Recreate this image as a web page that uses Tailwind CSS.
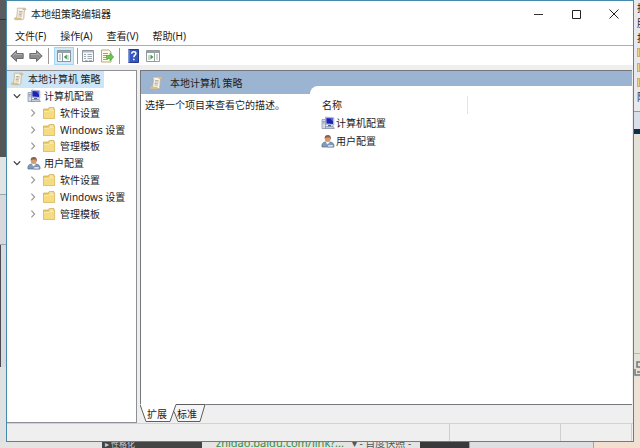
<!DOCTYPE html>
<html lang="zh-CN">
<head>
<meta charset="utf-8">
<title>本地组策略编辑器</title>
<script src="https://cdn.jsdelivr.net/npm/@tailwindcss/browser@4"></script>
</head>
<body class="h-screen overflow-hidden bg-[#e6e4e2] font-['Noto_Sans','Noto_Sans_CJK_SC',sans-serif] text-[10px] leading-4 text-[#1c1c1c]">
<svg class="hidden" aria-hidden="true">
  <symbol id="scroll" viewBox="0 0 14 14">
    <path d="M4.500 1.200h7.500c1 0 1.300 1.800 0 1.900l-.6 0-.6 7.900c0 1.200-.7 1.700-1.600 1.700H2.500c-1.400 0-1.500-2 0-2h1.100L4.600 3C3.900 2.500 3.800 1.500 4.500 1.200z" fill="#f8f3e6" stroke="#b8ae98" stroke-width=".8"/>
    <path d="M11.400 3.100H10c-.7-.3-.7-1.500.2-1.800H12c1 .2 1 1.700-.6 1.800zM1.500 11.600c0 .8.500 1.200 1 1.200h6.800c-.8-.3-1-1.300-.8-2.100H2.300c-.5 0-.8.400-.8.900z" fill="#d9bd83"/>
    <path d="M6 4.500h3.500M5.800 6h3.800M5.700 7.500h3M5.500 9h3.500" stroke="#aaa594" stroke-width=".8"/>
  </symbol>
  <symbol id="computer" viewBox="0 0 14 14">
    <path d="M1 3.500h3.500v9H1z" fill="#d4dbe6" stroke="#7f8ba3" stroke-width=".7"/>
    <path d="M1.700 5.500h2M1.700 7h2" stroke="#6d7892" stroke-width=".7"/>
    <path d="M4.500 1l8.300.8v7.400l-8.300-.7z" fill="#c9d3ec" stroke="#8490b5" stroke-width=".6"/>
    <path d="M5.400 1.900l6.600.6v5.600l-6.600-.6z" fill="#1d22b4"/>
    <path d="M9 2.300l3 .2v3.300z" fill="#5369dd"/>
    <path d="M7 9h3v1.500h-3z" fill="#5d687e"/>
    <path d="M4.800 10.500h7.400l1.200 2H4z" fill="#c7cdd8" stroke="#7b86a0" stroke-width=".7"/>
  </symbol>
  <symbol id="user" viewBox="0 0 14 14">
    <path d="M1 13c-.5-2.500.5-4.500 3-5h5c3 .3 4.300 2.200 4 5z" fill="#7f9cbf" stroke="#50698c" stroke-width=".7"/>
    <path d="M4.500 8l2 2.500L9 8z" fill="#f3f5f8"/>
    <circle cx="6.700" cy="4.700" r="3" fill="#d49a72"/>
    <path d="M3.700 4.300C3.400 2 5 .8 7 .9c2.200.1 3.300 1.700 2.800 4.100-.8-.3-.9-1.300-1.200-1.800-1.500.4-3.500-.2-4.900 1.100z" fill="#8a6048"/>
    <path d="M7 10.500h5.300v2.500H6.500z" fill="#d6dfeb" stroke="#65809f" stroke-width=".6"/>
  </symbol>
  <symbol id="folder" viewBox="0 0 14 14">
    <path d="M1.500 12.500V3h4.700l1-1.400h4.800v1.600h.6v9.300z" fill="#ebcb69" stroke="#cda748" stroke-width=".7"/>
    <path d="M7.400 2.500h4v1h-4z" fill="#fff8dd"/>
    <path d="M1.800 5h4.700l1-1h4.800v8.200H1.800z" fill="#f5dc83"/>
    <path d="M2 5.400h4.800l1-1H12" fill="none" stroke="#fff1b8" stroke-width=".7"/>
  </symbol>
  <symbol id="open" viewBox="0 0 8 8"><path d="M.8 2.400L4 5.600l3.200-3.200" fill="none" stroke="#3b3b3b" stroke-width="1.300"/></symbol>
  <symbol id="closed" viewBox="0 0 8 8"><path d="M2.400.6L5.600 4 2.400 7.400" fill="none" stroke="#9a9a9a" stroke-width="1.200"/></symbol>
  <symbol id="arrow" viewBox="0 0 14 14"><path d="M.8 7L6.500 1.500v3h6.700v5H6.500v3z" fill="#8d8d8d" stroke="#646464" stroke-width=".9"/><path d="M3 6.500l2.700-2.400v1.400h6.500" fill="none" stroke="#b5b5b5" stroke-width=".8"/></symbol>
</svg>

<div class="grid h-full grid-cols-[6px_minmax(0,1fr)_6px] grid-rows-[minmax(0,1fr)_6px]">
  <!-- desktop behind the left edge -->
  <div class="flex flex-col" aria-hidden="true">
    <div class="h-5 border-b border-[#333] bg-[#5b5c5e]"></div>
    <div class="h-[137px] bg-[#555658]"></div>
    <div class="h-[38px] border-b border-[#9ba3ab] bg-[#e2e3e5]"></div>
    <div class="h-[50px] border-b border-[#98a2ac] bg-[#d9d9dd]"></div>
    <div class="h-[122px] border-l border-[#4c4c55] bg-[#d8dade]"></div>
    <div class="grow bg-[#dfe1e3]"></div>
  </div>

  <main class="flex min-h-0 flex-col border border-[#4589ad] bg-[#efefef]">
    <header class="flex h-[25px] shrink-0 items-center bg-white pl-[6px]">
      <svg class="mr-1 size-[14px]"><use href="#scroll"/></svg>
      <h1 class="grow">本地组策略编辑器</h1>
      <button type="button" aria-label="最小化" class="grid h-6 w-[38px] place-items-center"><svg class="size-[10px]" viewBox="0 0 10 10"><path d="M1 5.500h9" stroke="#333"/></svg></button>
      <button type="button" aria-label="最大化" class="grid h-6 w-[38px] place-items-center"><svg class="size-[10px]" viewBox="0 0 10 10"><path d="M1.500 1.500h8v8h-8z" fill="none" stroke="#222"/></svg></button>
      <button type="button" aria-label="关闭" class="grid h-6 w-[38px] place-items-center"><svg class="size-[10px]" viewBox="0 0 10 10"><path d="M.5.500l9 9M9.500.500l-9 9" stroke="#222"/></svg></button>
    </header>

    <nav class="flex h-5 shrink-0 items-center gap-[14px] border-b border-[#a9b0b5] bg-white pl-2">
      <button type="button">文件(F)</button>
      <button type="button">操作(A)</button>
      <button type="button">查看(V)</button>
      <button type="button">帮助(H)</button>
    </nav>

    <div role="toolbar" aria-label="工具栏" class="flex h-[19px] shrink-0 items-center bg-white pl-[3px]">
      <button type="button" aria-label="后退"><svg class="size-[14px]"><use href="#arrow"/></svg></button>
      <button type="button" aria-label="前进" class="ml-[5px]"><svg class="size-[14px] -scale-x-100"><use href="#arrow"/></svg></button>
      <span class="mx-[5px] h-4 w-px bg-[#9a9a9a]"></span>
      <button type="button" aria-label="显示控制台树" class="grid h-[18px] w-5 place-items-center border border-[#a5d5ee] bg-[#cfe9f7]">
        <svg class="h-3 w-[14px]" viewBox="0 0 14 12"><path d="M.5.500h13v11H.5z" fill="#fff" stroke="#8a959c"/><path d="M1 1h12v2H1z" fill="#98a3ab"/><path d="M5.500 3v8.500" stroke="#8a959c"/><path d="M2 5h2M2 7h2M2 9h2M11 5v5" stroke="#a5adb2"/><path d="M9.800 4.500v5L6.800 7z" fill="#38a047"/></svg>
      </button>
      <span class="mx-[3px] h-4 w-px bg-[#9a9a9a]"></span>
      <button type="button" aria-label="属性">
        <svg class="size-[14px]" viewBox="0 0 14 14"><path d="M1.500 1.500h11v11h-11z" fill="#f6f8fa" stroke="#8b949c"/><path d="M2 2h10v1.500H2z" fill="#b2bcc5"/><path d="M3 5.500h2M3 7.500h2M3 9.500h2M6.500 5.500H11M6.500 7.500H11M6.500 9.500H11" stroke="#9fa9b2"/><path d="M4 12h2.500M8 12h3" stroke="#727c86"/></svg>
      </button>
      <button type="button" aria-label="导出列表" class="ml-[5px]">
        <svg class="size-[14px]" viewBox="0 0 14 14"><path d="M1.500 1h7.500l2 2v10h-9.500z" fill="#fffbe8" stroke="#b5aa80"/><path d="M3 4.500h5M3 6.500h4M3 8.500h3M3 10.500h5" stroke="#a4a180"/><path d="M6.500 6.500H10V4.200L13.700 8 10 11.800V9.500H6.500z" fill="#6dc54b" stroke="#36922d" stroke-width=".6"/></svg>
      </button>
      <span class="ml-[5px] mr-[6px] h-4 w-px bg-[#9a9a9a]"></span>
      <button type="button" aria-label="帮助">
        <svg class="size-[14px]" viewBox="0 0 14 14"><path d="M2.500.500h10v13h-10z" fill="#3557be" stroke="#24398b"/><path d="M2 .5h1.500v13H2z" fill="#8097dc"/><path d="M5.700 4.800c.1-3 4.300-2.700 4.200-.2 0 1.700-2.100 1.500-2.100 3.700M7.800 9.800v1.500" fill="none" stroke="#fff" stroke-width="1.500"/></svg>
      </button>
      <button type="button" aria-label="显示操作窗格" class="ml-[6px]">
        <svg class="h-3 w-[14px]" viewBox="0 0 14 12"><path d="M.5.500h13v11H.5z" fill="#fff" stroke="#929a9f"/><path d="M1 1h12v2H1z" fill="#98a0a6"/><path d="M8.500 3v8.500M3 5v5" stroke="#9ca4aa"/><path d="M4.500 4.500v5l3-2.500z" fill="#38a047"/><path d="M10 5h2M10 7h2M10 9h2" stroke="#a5adb2"/></svg>
      </button>
    </div>

    <div class="flex min-h-0 grow pt-[5px]">
      <aside class="w-[130px] shrink-0 border-y border-r border-[#8d9094] bg-white">
        <ul role="tree" class="grid h-[151px] grid-rows-9 *:flex *:items-center">
          <li role="treeitem" aria-level="1" aria-selected="true"><span class="flex h-full items-center gap-1 bg-[#cce6f8] pl-[3px] pr-[3px]"><svg class="size-[14px]"><use href="#scroll"/></svg>本地计算机 策略</span></li>
          <li role="treeitem" aria-level="2" aria-expanded="true" class="pl-[6px]"><svg class="mr-[6px] size-2"><use href="#open"/></svg><svg class="mr-[3px] size-[14px]"><use href="#computer"/></svg>计算机配置</li>
          <li role="treeitem" aria-level="3" aria-expanded="false" class="pl-[22px]"><svg class="mr-[5px] size-2"><use href="#closed"/></svg><svg class="mr-1 size-[14px]"><use href="#folder"/></svg>软件设置</li>
          <li role="treeitem" aria-level="3" aria-expanded="false" class="pl-[22px]"><svg class="mr-[5px] size-2"><use href="#closed"/></svg><svg class="mr-1 size-[14px]"><use href="#folder"/></svg>Windows 设置</li>
          <li role="treeitem" aria-level="3" aria-expanded="false" class="pl-[22px]"><svg class="mr-[5px] size-2"><use href="#closed"/></svg><svg class="mr-1 size-[14px]"><use href="#folder"/></svg>管理模板</li>
          <li role="treeitem" aria-level="2" aria-expanded="true" class="pl-[6px]"><svg class="mr-[6px] size-2"><use href="#open"/></svg><svg class="mr-[3px] size-[14px]"><use href="#user"/></svg>用户配置</li>
          <li role="treeitem" aria-level="3" aria-expanded="false" class="pl-[22px]"><svg class="mr-[5px] size-2"><use href="#closed"/></svg><svg class="mr-1 size-[14px]"><use href="#folder"/></svg>软件设置</li>
          <li role="treeitem" aria-level="3" aria-expanded="false" class="pl-[22px]"><svg class="mr-[5px] size-2"><use href="#closed"/></svg><svg class="mr-1 size-[14px]"><use href="#folder"/></svg>Windows 设置</li>
          <li role="treeitem" aria-level="3" aria-expanded="false" class="pl-[22px]"><svg class="mr-[5px] size-2"><use href="#closed"/></svg><svg class="mr-1 size-[14px]"><use href="#folder"/></svg>管理模板</li>
        </ul>
      </aside>

      <section class="ml-[3px] flex min-w-0 grow flex-col">
        <div class="mr-px flex min-h-0 grow flex-col border-b border-l border-t border-[#74787d] bg-white">
          <div class="flex bg-[#9ab4d1]">
            <h2 class="flex h-[23px] w-[169px] shrink-0 items-center gap-[7px] pl-2"><svg class="size-[14px]"><use href="#scroll"/></svg>本地计算机 策略</h2>
            <div class="mt-[15px] grow rounded-tl-lg bg-white"></div>
          </div>
          <div class="flex min-h-0 grow items-start">
            <p class="w-[169px] shrink-0 pl-1 pt-[3px]">选择一个项目来查看它的描述。</p>
            <table class="mt-[2px] w-[158px] border-collapse text-left">
              <thead><tr class="h-[18px]"><th class="border-r border-[#e3e3e3] p-0 pl-3 font-normal">名称</th></tr></thead>
              <tbody>
                <tr class="h-[18px]"><td class="p-0 pl-[11px]"><span class="flex items-center gap-px"><svg class="size-[14px]"><use href="#computer"/></svg>计算机配置</span></td></tr>
                <tr class="h-[18px]"><td class="p-0 pl-[11px]"><span class="flex items-center gap-px"><svg class="size-[14px]"><use href="#user"/></svg>用户配置</span></td></tr>
              </tbody>
            </table>
          </div>
        </div>
        <div role="tablist" class="relative flex h-[18px] shrink-0 items-center pl-[7px]">
          <svg class="absolute -top-px left-0 h-[18px] w-[66px]" viewBox="0 0 66 18" aria-hidden="true"><path d="M34 0h31.500l-5.500 17H37l-3-8z" fill="#f5f5f5"/><path d="M0 0l6 17h24l6-17z" fill="#fff"/><path d="M0 .5L6 17.500h24L36 .5h29L60 17.500H38l-4-10" fill="none" stroke="#5e5e5e"/></svg>
          <button type="button" role="tab" aria-selected="true" class="relative w-[30px] text-left">扩展</button>
          <button type="button" role="tab" aria-selected="false" class="relative">标准</button>
        </div>
      </section>
    </div>

    <footer class="flex h-[18px] shrink-0 border-t border-[#d2d2d2]">
      <div class="grow border-r border-[#cfcfcf]"></div>
      <div class="w-[111px] border-r border-[#cfcfcf]"></div>
      <div class="w-[71px] border-r border-[#cfcfcf]"></div>
      <div class="w-px"></div>
    </footer>
  </main>

  <!-- desktop behind the right edge -->
  <div class="flex flex-col overflow-hidden bg-[#e4e2d6]" aria-hidden="true">
    <div class="flex h-[112px] flex-col overflow-hidden border-b border-[#999] bg-[#e8e9ec] pl-[3px]">
      <span class="h-[15px] w-4">持</span><span class="h-[15px] w-4">服</span><span class="h-[15px] w-4">按</span>
      <span class="mt-[3px] h-[9px] shrink-0 border border-[#cfae5c] bg-[#ecd591]"></span><span class="mt-[6px] h-[9px] shrink-0 border border-[#cfae5c] bg-[#ecd591]"></span><span class="mt-[6px] h-[9px] shrink-0 border border-[#cfae5c] bg-[#ecd591]"></span>
      <span class="mt-[2px] h-4 w-4">隐</span>
    </div>
    <div class="h-[17px] bg-[#d9dfe8]"></div>
    <div class="h-[5px] bg-[#0d3046]"></div>
    <div class="h-[220px] border-b border-[#bab8ad]"></div>
    <svg class="mt-[7px] h-4 w-[6px]" viewBox="0 0 6 16"><path d="M6 1H3v5h3M1 8v6h5M3 11h3" fill="none" stroke="#77777b" stroke-width="1.500"/></svg>
    <div class="grow bg-[#eee1d5]"></div>
  </div>

  <!-- desktop below the window -->
  <div class="col-span-3 flex items-end overflow-hidden bg-[#e5e4e2]" aria-hidden="true">
    <div class="ml-[102px] flex h-[6px] w-[100px] items-end overflow-hidden bg-[#444] pl-[3px] text-[8px] leading-[9px] text-[#ccc]">▸ 性格化</div>
    <div class="ml-[14px] flex w-[204px] shrink-0 items-center gap-2 whitespace-nowrap text-[11px] leading-[10px] text-[#3c8a46]"><span>zhidao.baidu.com/link?...</span><span class="text-[10px] text-[#555]">▾ - 百度快照 -</span></div>
    <div class="h-[6px] w-[49px] bg-[#39393b]"></div>
    <div class="h-[6px] w-[125px] border-x border-[#dc9a42] bg-[#dfdfe3]"></div>
    <div class="h-[6px] grow bg-[#f3ded0]"></div>
  </div>
</div>
</body>
</html>
